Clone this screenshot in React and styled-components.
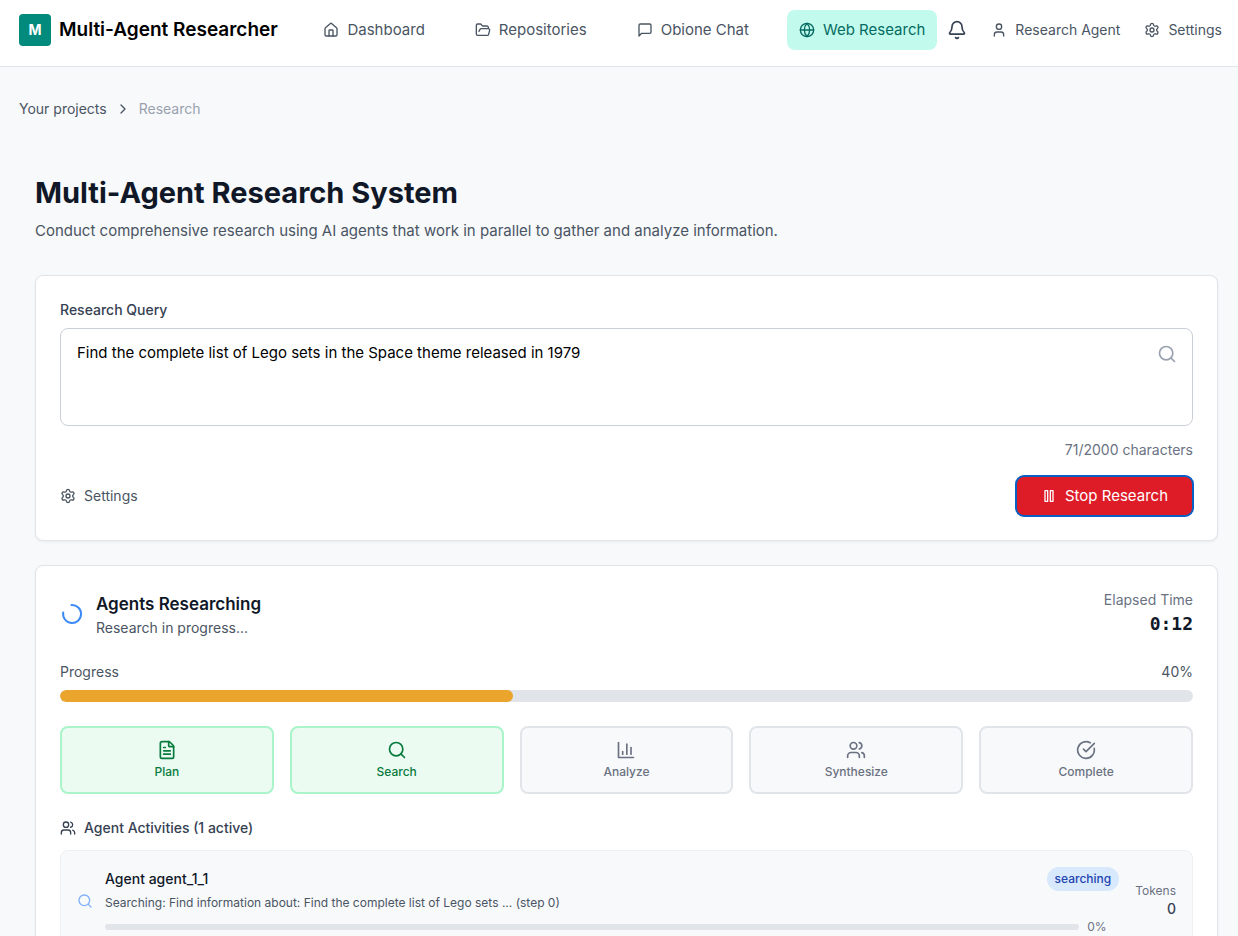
import React from "react";
import styled, { createGlobalStyle } from "styled-components";
import { House, FolderOpen, Bell, User, Settings, ChevronRight, Search, Users, FileText, CircleCheckBig } from "lucide-react";

const Global = createGlobalStyle`
  *, *::before, *::after { box-sizing: border-box; }
  body { margin: 0; background: #f8f9fb; color: #000; font: 400 15px/24px Inter, sans-serif; }
  h1, h2, h3, p { margin: 0; }
  button, textarea { font: inherit; }
  a { color: inherit; text-decoration: none; }
  svg { display: block; flex: none; }
`;

const Header = styled.header`
  display: flex;
  align-items: center;
  justify-content: space-between;
  padding: 10px 16px 16px 19px;
  background: #fff;
  border-bottom: 1px solid #e0e4eb;
`;
const Brand = styled.a`
  display: flex;
  align-items: center;
  gap: 8px;
  font-size: 19px;
  font-weight: 600;
  white-space: nowrap;
`;
const Logo = styled.span`
  display: grid;
  place-items: center;
  width: 32px;
  height: 32px;
  border-radius: 4px;
  background: #028a7c;
  color: #fff;
  font-size: 14px;
  font-weight: 700;
`;
const Nav = styled.nav`
  display: flex;
  gap: 26px;
`;
const NavLink = styled.a`
  display: flex;
  align-items: center;
  gap: 8px;
  height: 40px;
  padding: 0 12px;
  border-radius: 8px;
  white-space: nowrap;
  color: ${(p) => (p.$active ? "#056b60" : "#4a5563")};
  background: ${(p) => (p.$active ? "#c2faee" : "transparent")};
`;
const NavGroup = styled.div`
  display: flex;
  align-items: center;
  gap: 10px;
`;
const Tools = styled.div`
  display: flex;
  align-items: center;
  gap: 24px;
`;
const IconButton = styled.button`
  padding: 0;
  border: 0;
  background: none;
  color: #364153;
`;
const QuietLink = styled.a`
  display: flex;
  align-items: center;
  gap: 8px;
  font-size: 14px;
  white-space: nowrap;
  color: #4a5563;
`;
const QuietButton = styled(QuietLink).attrs({ as: "button", type: "button" })`
  padding: 0;
  border: 0;
  background: none;
`;

const Crumbs = styled.nav`
  display: flex;
  align-items: center;
  gap: 8px;
  padding: 32px 19px 0;
  font-size: 14px;
  line-height: 20px;
  color: #4a5563;
`;
const Current = styled.span`
  color: #99a1af;
`;

const Main = styled.main`
  display: flex;
  flex-direction: column;
  gap: 24px;
  padding: 56px 20px 24px 35px;
`;
const Intro = styled.div`
  display: flex;
  flex-direction: column;
  gap: 8px;
  padding-bottom: 8px;
`;
const Title = styled.h1`
  font-size: 29px;
  line-height: 36px;
  font-weight: 700;
  color: #101828;
`;
const Lead = styled.p`
  color: #4a5563;
`;
const Card = styled.section`
  padding: 24px;
  background: #fff;
  border: 1px solid #e1e4e8;
  border-radius: 8px;
  box-shadow: 0 1px 3px rgba(0, 0, 0, 0.06);
`;

const FieldLabel = styled.label`
  display: block;
  margin-bottom: 8px;
  font-size: 14px;
  line-height: 20px;
  font-weight: 500;
  color: #364153;
`;
const Field = styled.div`
  position: relative;
`;
const QueryBox = styled.textarea`
  display: block;
  width: 100%;
  height: 98px;
  padding: 12px 48px 12px 16px;
  border: 1px solid #cbd0d8;
  border-radius: 8px;
  outline: 0;
  resize: none;
  background: #fff;
  color: #000;
`;
const FieldIcon = styled.span`
  position: absolute;
  top: 16px;
  right: 16px;
  color: #99a1af;
`;
const Counter = styled.p`
  margin: 14px 0 16px;
  text-align: right;
  font-size: 14px;
  line-height: 20px;
  color: #6a7282;
`;
const Row = styled.div`
  display: flex;
  align-items: center;
  justify-content: space-between;
`;
const StopButton = styled.button`
  display: flex;
  align-items: center;
  justify-content: center;
  gap: 8px;
  min-width: 177px;
  height: 40px;
  padding: 0 24px;
  border: 0;
  border-radius: 8px;
  outline: 2px solid #0860c4;
  outline-offset: -1px;
  background: #de1c27;
  color: #fff;
`;

const Status = styled.div`
  display: flex;
  align-items: center;
  gap: 12px;
`;
const StatusTitle = styled.h2`
  font-size: 17px;
  line-height: 28px;
  font-weight: 600;
  color: #101828;
`;
const Small = styled.p`
  font-size: 14px;
  line-height: 20px;
  color: #4a5563;
`;
const Elapsed = styled.div`
  text-align: right;
`;
const ElapsedLabel = styled(Small)`
  color: #6a7282;
`;
const Clock = styled.p`
  font: 700 18px/28px "DejaVu Sans Mono", monospace;
  color: #101828;
`;
const ProgressHead = styled(Row)`
  margin: 24px 0 8px;
`;
const Track = styled.div`
  flex: 1;
  height: ${(p) => (p.$thin ? "6px" : "12px")};
  border-radius: 6px;
  background: #e1e4e8;
  overflow: hidden;
`;
const Fill = styled.div`
  height: 100%;
  border-radius: 6px;
  background: #eba52d;
`;
const Steps = styled.div`
  display: grid;
  grid-template-columns: repeat(5, 1fr);
  gap: 16px;
  margin: 24px 0;
`;
const Step = styled.div`
  display: flex;
  flex-direction: column;
  align-items: center;
  gap: 4px;
  height: 68px;
  padding: 12px;
  border: 2px solid ${(p) => (p.$done ? "#a9f5c9" : "#e1e4e8")};
  border-radius: 8px;
  background: ${(p) => (p.$done ? "#ebfbf2" : "#f8f9fb")};
  color: ${(p) => (p.$done ? "#077a3c" : "#6a7282")};
  font-size: 12px;
  line-height: 16px;
  font-weight: 500;
`;
const ActivityTitle = styled.h3`
  display: flex;
  align-items: center;
  gap: 8px;
  margin-bottom: 12px;
  font-size: 14px;
  line-height: 20px;
  font-weight: 500;
  color: #364153;
`;
const Agent = styled.article`
  display: flex;
  align-items: center;
  padding: 16px;
  border: 1px solid #eef0f3;
  border-radius: 8px;
  background: #f8f9fb;
`;
const AgentIcon = styled.span`
  margin-right: 12px;
  color: #7fb0f8;
`;
const AgentBody = styled.div`
  flex: 1;
  min-width: 0;
`;
const AgentName = styled.p`
  font-size: 14px;
  line-height: 20px;
  font-weight: 500;
  color: #101828;
`;
const Badge = styled.span`
  padding: 4px 8px;
  border-radius: 12px;
  background: #d8e8fd;
  color: #2244b0;
  font-size: 12px;
  line-height: 16px;
  font-weight: 500;
`;
const Note = styled.p`
  margin: 4px 0 8px;
  font-size: 12px;
  line-height: 16px;
  color: #4a5563;
`;
const AgentProgress = styled.div`
  display: flex;
  align-items: center;
  gap: 8px;
`;
const Percent = styled.span`
  width: 32px;
  font-size: 12px;
  line-height: 16px;
  color: #6a7282;
`;
const Tokens = styled.div`
  margin-left: 16px;
  text-align: right;
  font-size: 12px;
  line-height: 16px;
  color: #6a7282;
`;
const TokenCount = styled.p`
  font-size: 14px;
  line-height: 20px;
  font-weight: 500;
  color: #364153;
`;

const Drawing = ({ size, children }) => (
  <svg width={size} height={size} viewBox="0 0 24 24" fill="none" stroke="currentColor" strokeWidth="2" strokeLinecap="round" strokeLinejoin="round" aria-hidden="true">
    {children}
  </svg>
);
const ChatIcon = () => (
  <Drawing size={16}><path d="M21 15a2 2 0 0 1-2 2H7l-4 4V5a2 2 0 0 1 2-2h14a2 2 0 0 1 2 2z" /></Drawing>
);
const GlobeIcon = () => (
  <Drawing size={16}><circle cx="12" cy="12" r="10" /><path d="M2 12h20" /><path d="M12 2a14.5 14.5 0 0 0 0 20 14.5 14.5 0 0 0 0-20" /></Drawing>
);
const PauseIcon = () => (
  <Drawing size={16}><path d="M6 4h4v16H6z" /><path d="M14 4h4v16h-4z" /></Drawing>
);
const ChartIcon = () => (
  <Drawing size={20}><path d="M3 3v18h18" /><path d="M18 17V9" /><path d="M13 17V5" /><path d="M8 17v-3" /></Drawing>
);
const Spinner = () => (
  <svg width="24" height="24" viewBox="0 0 24 24" fill="none" stroke="#3b8af6" strokeWidth="2" strokeLinecap="round" aria-hidden="true">
    <path d="M11.5 3A9 9 0 1 1 3.2 10.5" />
  </svg>
);

const links = [
  ["Dashboard", <House size={16} />],
  ["Repositories", <FolderOpen size={16} />],
  ["Obione Chat", <ChatIcon />],
  ["Web Research", <GlobeIcon />],
];
const steps = [
  ["Plan", <FileText size={20} />],
  ["Search", <Search size={20} />],
  ["Analyze", <ChartIcon />],
  ["Synthesize", <Users size={20} />],
  ["Complete", <CircleCheckBig size={20} />],
];
const progress = 40;

export default function App() {
  return (
    <>
      <Global />
      <Header>
        <Brand href="#"><Logo>M</Logo>Multi-Agent Researcher</Brand>
        <NavGroup>
          <Nav>
            {links.map(([name, icon]) => (
              <NavLink key={name} href="#" $active={name === "Web Research"}>{icon}{name}</NavLink>
            ))}
          </Nav>
          <Tools>
            <IconButton type="button" aria-label="Notifications"><Bell size={20} /></IconButton>
            <QuietLink href="#"><User size={16} />Research Agent</QuietLink>
            <QuietLink href="#"><Settings size={16} />Settings</QuietLink>
          </Tools>
        </NavGroup>
      </Header>
      <Crumbs aria-label="Breadcrumb">
        <a href="#">Your projects</a><ChevronRight size={16} /><Current>Research</Current>
      </Crumbs>
      <Main>
        <Intro>
          <Title>Multi-Agent Research System</Title>
          <Lead>Conduct comprehensive research using AI agents that work in parallel to gather and analyze information.</Lead>
        </Intro>
        <Card>
          <FieldLabel htmlFor="query">Research Query</FieldLabel>
          <Field>
            <QueryBox id="query" defaultValue="Find the complete list of Lego sets in the Space theme released in 1979" />
            <FieldIcon><Search size={20} /></FieldIcon>
          </Field>
          <Counter>71/2000 characters</Counter>
          <Row>
            <QuietButton><Settings size={16} />Settings</QuietButton>
            <StopButton type="button"><PauseIcon />Stop Research</StopButton>
          </Row>
        </Card>
        <Card>
          <Row>
            <Status>
              <Spinner />
              <div>
                <StatusTitle>Agents Researching</StatusTitle>
                <Small>Research in progress...</Small>
              </div>
            </Status>
            <Elapsed>
              <ElapsedLabel>Elapsed Time</ElapsedLabel>
              <Clock>0:12</Clock>
            </Elapsed>
          </Row>
          <ProgressHead><Small>Progress</Small><Small>{progress}%</Small></ProgressHead>
          <Track role="progressbar" aria-label="Progress" aria-valuenow={progress}><Fill style={{ width: `${progress}%` }} /></Track>
          <Steps>
            {steps.map(([name, icon], i) => <Step key={name} $done={i < 2}>{icon}{name}</Step>)}
          </Steps>
          <ActivityTitle><Users size={16} />Agent Activities (1 active)</ActivityTitle>
          <Agent>
            <AgentIcon><Search size={16} /></AgentIcon>
            <AgentBody>
              <Row><AgentName>Agent agent_1_1</AgentName><Badge>searching</Badge></Row>
              <Note>Searching: Find information about: Find the complete list of Lego sets ... (step 0)</Note>
              <AgentProgress>
                <Track $thin role="progressbar" aria-label="Agent progress" aria-valuenow={0} />
                <Percent>0%</Percent>
              </AgentProgress>
            </AgentBody>
            <Tokens>Tokens<TokenCount>0</TokenCount></Tokens>
          </Agent>
        </Card>
      </Main>
    </>
  );
}
